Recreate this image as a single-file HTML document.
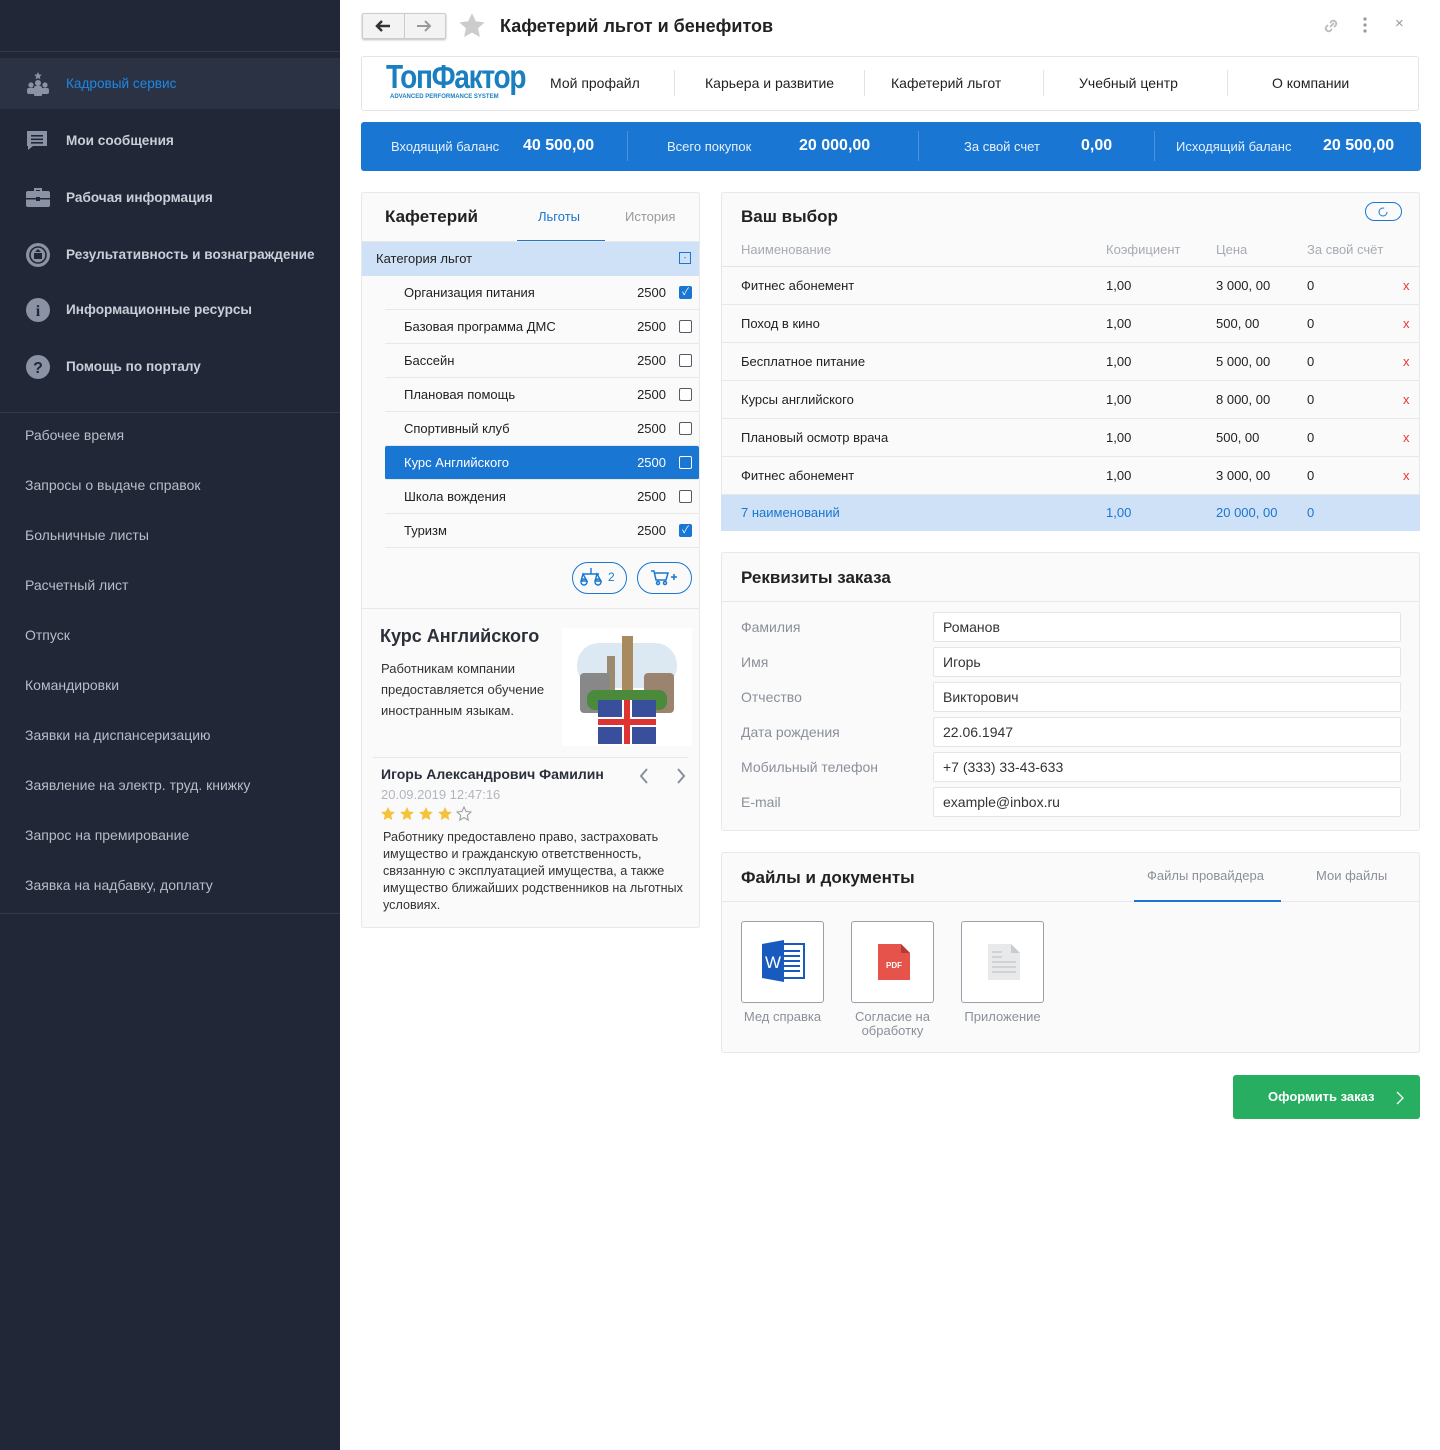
<!DOCTYPE html>
<html><head><meta charset="utf-8"><style>
*{box-sizing:border-box;margin:0;padding:0}
body{width:1440px;height:1450px;background:#fff;font-family:"Liberation Sans","Noto Sans CJK SC",sans-serif;color:#222;position:relative;overflow:hidden;font-size:13px}
.a{position:absolute}
#sb{left:0;top:0;width:340px;height:1450px;background:#212736}
.nav{left:0;width:340px;height:50px;color:#c9ced8;font-size:13.6px;font-weight:bold;display:flex;align-items:center;padding-left:66px}
.nav svg{position:absolute;left:25px;top:13px}
.sub{left:25px;color:#b8bdc8;font-size:14px}
.card{background:#fafafa;border:1px solid #e6e8eb;border-radius:3px}
.row{height:34px;border-bottom:1px solid #e8e8e8;display:flex;align-items:center;font-size:13px}
.cb{width:13px;height:13px;border:1.5px solid #555c66;border-radius:2px;background:#fff}
.cbx{width:13px;height:13px;background:#1976d2;border-radius:2px;color:#fff;font-size:10px;line-height:13px;text-align:center}
.tr{position:absolute;left:721px;width:699px;height:38px;border-bottom:1px solid #e8e8e8;font-size:13px}
.tr span{position:absolute;top:11px}
.x{color:#e53935;left:682px}
.fl{left:741px;color:#8a909a;font-size:14px}
.in{left:933px;width:468px;height:30px;background:#fff;border:1px solid #e3e5e8;border-radius:2px;font-size:14px;padding:6px 9px;color:#333}
.fb{width:83px;height:82px;border:1px solid #9aa0aa;border-radius:3px;background:#fff}
.fc{width:83px;text-align:center;color:#8a909a;font-size:13px;line-height:14px}
</style></head><body>
<div id="sb" class="a">
 <div class="a" style="left:0;top:51px;width:340px;height:1px;background:#323a4a"></div>
 <div class="a" style="left:0;top:58px;width:340px;height:51px;background:#2a3243"></div>
 <div class="a nav" style="top:58px;color:#1e88e5;font-weight:normal"><svg width="26" height="26" viewBox="0 0 26 26" fill="#8a92a3"><path d="M13 1l1.2 2.5 2.6.3-2 1.8.6 2.6L13 7l-2.4 1.2.6-2.6-2-1.8 2.6-.3z"/><circle cx="13" cy="12" r="3"/><circle cx="6" cy="14" r="2.6"/><circle cx="20" cy="14" r="2.6"/><rect x="9" y="15" width="8" height="6" rx="2"/><rect x="2" y="17" width="8" height="6" rx="2"/><rect x="16" y="17" width="8" height="6" rx="2"/><rect x="9" y="21" width="8" height="4" rx="1"/></svg>Кадровый сервис</div>
 <div class="a nav" style="top:115px"><svg width="24" height="24" viewBox="0 0 24 24" fill="#8a92a3"><path d="M2 3h20v15H8l-5 4v-4H2z"/><rect x="6" y="7" width="12" height="1.6" fill="#212736"/><rect x="6" y="10.5" width="12" height="1.6" fill="#212736"/><rect x="6" y="14" width="12" height="1.6" fill="#212736"/></svg>Мои сообщения</div>
 <div class="a nav" style="top:172px"><svg width="26" height="24" viewBox="0 0 26 24" fill="#8a92a3"><path d="M9 3h8v3h-2V5h-4v1H9z"/><rect x="1" y="6" width="24" height="16" rx="2"/><rect x="1" y="13" width="24" height="1.5" fill="#212736"/><rect x="11" y="12" width="4" height="4" fill="#212736"/></svg>Рабочая информация</div>
 <div class="a nav" style="top:229px"><svg width="26" height="26" viewBox="0 0 26 26"><circle cx="13" cy="13" r="12" fill="#8a92a3"/><circle cx="13" cy="13" r="8" fill="none" stroke="#212736" stroke-width="1.6"/><rect x="9" y="11" width="8" height="6" fill="#212736"/><path d="M10 10l3-3 3 3z" fill="#212736"/></svg>Результативность и вознаграждение</div>
 <div class="a nav" style="top:284px"><svg width="26" height="26" viewBox="0 0 26 26"><circle cx="13" cy="13" r="12" fill="#8a92a3"/><text x="13" y="19" font-size="16" font-weight="bold" text-anchor="middle" fill="#212736" font-family="Liberation Serif">i</text></svg>Информационные ресурсы</div>
 <div class="a nav" style="top:341px"><svg width="26" height="26" viewBox="0 0 26 26"><circle cx="13" cy="13" r="12" fill="#8a92a3"/><text x="13" y="19" font-size="16" font-weight="bold" text-anchor="middle" fill="#212736">?</text></svg>Помощь по порталу</div>
 <div class="a" style="left:0;top:412px;width:340px;height:1px;background:#323a4a"></div>
 <div class="a sub" style="top:427px">Рабочее время</div>
 <div class="a sub" style="top:477px">Запросы о выдаче справок</div>
 <div class="a sub" style="top:527px">Больничные листы</div>
 <div class="a sub" style="top:577px">Расчетный лист</div>
 <div class="a sub" style="top:627px">Отпуск</div>
 <div class="a sub" style="top:677px">Командировки</div>
 <div class="a sub" style="top:727px">Заявки на диспансеризацию</div>
 <div class="a sub" style="top:777px">Заявление на электр. труд. книжку</div>
 <div class="a sub" style="top:827px">Запрос на премирование</div>
 <div class="a sub" style="top:877px">Заявка на надбавку, доплату</div>
 <div class="a" style="left:0;top:913px;width:340px;height:1px;background:#323a4a"></div>
</div>

<div class="a" style="left:362px;top:13px;width:84px;height:26px;border:1px solid #ccc;border-radius:2px;background:#f3f3f3;box-shadow:0 1px 2px #bbb"></div>
<div class="a" style="left:404px;top:14px;width:1px;height:24px;background:#ccc"></div>
<svg class="a" style="left:374px;top:19px" width="18" height="14" viewBox="0 0 18 14"><path d="M16 7H4M8 2L3 7l5 5" stroke="#333" stroke-width="2.5" fill="none"/></svg>
<svg class="a" style="left:415px;top:19px" width="18" height="14" viewBox="0 0 18 14"><path d="M2 7h12M10 2l5 5-5 5" stroke="#999" stroke-width="2" fill="none"/></svg>
<svg class="a" style="left:458px;top:12px" width="28" height="27" viewBox="0 0 24 23"><path d="M12 1l3.3 7 7.5.8-5.6 5.1 1.6 7.5L12 17.6 5.2 21.4l1.6-7.5L1.2 8.8l7.5-.8z" fill="#ccc"/></svg>
<div class="a" style="left:500px;top:16px;font-size:18px;font-weight:bold;color:#222">Кафетерий льгот и бенефитов</div>
<svg class="a" style="left:1322px;top:17px" width="18" height="18" viewBox="0 0 18 18"><path d="M8 10l4-4M6 8l-2 2a3 3 0 004 4l2-2M12 10l2-2a3 3 0 00-4-4L8 6" stroke="#bbb" stroke-width="1.8" fill="none"/></svg>
<svg class="a" style="left:1362px;top:17px" width="6" height="16"><circle cx="3" cy="2" r="1.6" fill="#999"/><circle cx="3" cy="8" r="1.6" fill="#999"/><circle cx="3" cy="14" r="1.6" fill="#999"/></svg>
<div class="a" style="left:1395px;top:15px;color:#999;font-size:15px">×</div>

<div class="a" style="left:361px;top:56px;width:1058px;height:55px;border:1px solid #e2e4e8;border-radius:3px;background:#fff"></div>
<div class="a" style="left:386px;top:58px;font-size:33px;font-weight:bold;color:#1a7fc1;letter-spacing:-1.5px;transform:scaleX(.85);transform-origin:left">ТопФактор</div>
<div class="a" style="left:390px;top:94px;font-size:6px;font-weight:bold;color:#1a7fc1">ADVANCED PERFORMANCE SYSTEM</div>
<div class="a" style="left:550px;top:75px;font-size:14px">Мой профайл</div>
<div class="a" style="left:674px;top:70px;width:1px;height:26px;background:#e3e3e3"></div>
<div class="a" style="left:705px;top:75px;font-size:14px">Карьера и развитие</div>
<div class="a" style="left:864px;top:70px;width:1px;height:26px;background:#e3e3e3"></div>
<div class="a" style="left:891px;top:75px;font-size:14px">Кафетерий льгот</div>
<div class="a" style="left:1043px;top:70px;width:1px;height:26px;background:#e3e3e3"></div>
<div class="a" style="left:1079px;top:75px;font-size:14px">Учебный центр</div>
<div class="a" style="left:1227px;top:70px;width:1px;height:26px;background:#e3e3e3"></div>
<div class="a" style="left:1272px;top:75px;font-size:14px">О компании</div>

<div class="a" style="left:361px;top:122px;width:1060px;height:49px;background:#1976d2;border-radius:3px;color:#fff"></div>
<div class="a" style="left:391px;top:139px;color:#e8f0fb;font-size:13px">Входящий баланс</div>
<div class="a" style="left:523px;top:137px;color:#fff;font-size:16px;font-weight:bold">40 500,00</div>
<div class="a" style="left:627px;top:131px;width:1px;height:30px;background:#4b93e0"></div>
<div class="a" style="left:667px;top:139px;color:#e8f0fb;font-size:13px">Всего покупок</div>
<div class="a" style="left:799px;top:137px;color:#fff;font-size:16px;font-weight:bold">20 000,00</div>
<div class="a" style="left:918px;top:131px;width:1px;height:30px;background:#4b93e0"></div>
<div class="a" style="left:964px;top:139px;color:#e8f0fb;font-size:13px">За свой счет</div>
<div class="a" style="left:1081px;top:137px;color:#fff;font-size:16px;font-weight:bold">0,00</div>
<div class="a" style="left:1154px;top:131px;width:1px;height:30px;background:#4b93e0"></div>
<div class="a" style="left:1176px;top:139px;color:#e8f0fb;font-size:13px">Исходящий баланс</div>
<div class="a" style="left:1323px;top:137px;color:#fff;font-size:16px;font-weight:bold">20 500,00</div>

<!-- left card -->
<div class="a card" style="left:361px;top:192px;width:339px;height:736px"></div>
<div class="a" style="left:385px;top:207px;font-size:17px;font-weight:bold">Кафетерий</div>
<div class="a" style="left:538px;top:209px;color:#1976d2;font-size:13px">Льготы</div>
<div class="a" style="left:625px;top:209px;color:#999;font-size:13px">История</div>
<div class="a" style="left:517px;top:240px;width:88px;height:2px;background:#1976d2"></div>
<div class="a" style="left:361px;top:241px;width:338px;height:1px;background:#e6e8eb"></div>
<div class="a" style="left:362px;top:242px;width:337px;height:34px;background:#cfe1f6"></div>
<div class="a" style="left:376px;top:251px;font-size:13px">Категория льгот</div>
<div class="a" style="left:679px;top:252px;width:12px;height:12px;border:1px solid #1976d2;font-size:8px;color:#1976d2;text-align:center;line-height:9px">-</div>
<div class="a" style="left:385px;top:276px;width:314px">
 <div class="row"><span style="margin-left:19px;flex:1">Организация питания</span><span style="margin-right:13px">2500</span><div class="cbx" style="margin-right:7px">✓</div></div>
 <div class="row"><span style="margin-left:19px;flex:1">Базовая программа ДМС</span><span style="margin-right:13px">2500</span><div class="cb" style="margin-right:7px"></div></div>
 <div class="row"><span style="margin-left:19px;flex:1">Бассейн</span><span style="margin-right:13px">2500</span><div class="cb" style="margin-right:7px"></div></div>
 <div class="row"><span style="margin-left:19px;flex:1">Плановая помощь</span><span style="margin-right:13px">2500</span><div class="cb" style="margin-right:7px"></div></div>
 <div class="row"><span style="margin-left:19px;flex:1">Спортивный клуб</span><span style="margin-right:13px">2500</span><div class="cb" style="margin-right:7px"></div></div>
 <div class="row" style="background:#1976d2;color:#fff;border-radius:2px"><span style="margin-left:19px;flex:1">Курс Английского</span><span style="margin-right:13px">2500</span><div class="cb" style="margin-right:7px;border-color:#fff;background:#1976d2"></div></div>
 <div class="row"><span style="margin-left:19px;flex:1">Школа вождения</span><span style="margin-right:13px">2500</span><div class="cb" style="margin-right:7px"></div></div>
 <div class="row"><span style="margin-left:19px;flex:1">Туризм</span><span style="margin-right:13px">2500</span><div class="cbx" style="margin-right:7px">✓</div></div>
</div>
<div class="a" style="left:572px;top:562px;width:55px;height:32px;border:1.5px solid #1976d2;border-radius:16px;color:#1976d2;font-size:12px;padding:7px 0 0 35px">2</div>
<svg class="a" style="left:580px;top:567px" width="22" height="20" viewBox="0 0 22 20" fill="none" stroke="#1976d2" stroke-width="1.4"><path d="M11 1v6M3 7h16M3 7l-2 7h6zM17 7l-2 7h6z"/><circle cx="4" cy="15" r="3"/><circle cx="18" cy="15" r="3"/></svg>
<div class="a" style="left:637px;top:562px;width:55px;height:32px;border:1.5px solid #1976d2;border-radius:16px"></div>
<svg class="a" style="left:650px;top:569px" width="30" height="18" viewBox="0 0 30 18" fill="none" stroke="#1976d2" stroke-width="1.5"><path d="M1 2h3l2 9h10l2-7H5"/><circle cx="8" cy="14" r="1.5"/><circle cx="15" cy="14" r="1.5"/><path d="M21 8h6M24 5v6"/></svg>
<div class="a" style="left:361px;top:608px;width:338px;height:1px;background:#e6e8eb"></div>
<div class="a" style="left:380px;top:626px;font-size:18px;font-weight:bold;color:#2a2f3a">Курс Английского</div>
<div class="a" style="left:381px;top:658px;width:180px;font-size:13px;line-height:21px;color:#333">Работникам компании предоставляется обучение иностранным языкам.</div>
<div class="a" style="left:562px;top:628px;width:130px;height:118px;background:#fff;overflow:hidden">
 <div class="a" style="left:15px;top:15px;width:100px;height:45px;background:#dde9f2;border-radius:22px"></div>
 <div class="a" style="left:60px;top:8px;width:11px;height:65px;background:#a98a5e"></div>
 <div class="a" style="left:45px;top:28px;width:8px;height:40px;background:#9a8a70"></div>
 <div class="a" style="left:18px;top:45px;width:30px;height:40px;background:#888;border-radius:4px"></div>
 <div class="a" style="left:82px;top:45px;width:30px;height:40px;background:#9a8470;border-radius:4px"></div>
 <div class="a" style="left:25px;top:62px;width:80px;height:20px;background:#4a8a3a;border-radius:8px"></div>
 <div class="a" style="left:36px;top:72px;width:58px;height:44px;background:#3a4f9c"></div>
 <div class="a" style="left:36px;top:89px;width:58px;height:10px;background:#fff"></div>
 <div class="a" style="left:60px;top:72px;width:10px;height:44px;background:#fff"></div>
 <div class="a" style="left:36px;top:91px;width:58px;height:6px;background:#d33"></div>
 <div class="a" style="left:62px;top:72px;width:6px;height:44px;background:#d33"></div>
</div>
<div class="a" style="left:373px;top:757px;width:315px;height:1px;background:#e6e8eb"></div>
<div class="a" style="left:381px;top:766px;font-size:14px;font-weight:bold;color:#2a2f3a">Игорь Александрович Фамилин</div>
<svg class="a" style="left:638px;top:767px" width="12" height="18"><path d="M9 2L3 9l6 7" stroke="#8a909a" stroke-width="2" fill="none"/></svg>
<svg class="a" style="left:675px;top:767px" width="12" height="18"><path d="M3 2l6 7-6 7" stroke="#8a909a" stroke-width="2" fill="none"/></svg>
<div class="a" style="left:381px;top:787px;color:#b0b5be;font-size:13px">20.09.2019 12:47:16</div>
<svg class="a" style="left:380px;top:806px" width="95" height="16" viewBox="0 0 95 16"><g id="s"><path d="M8 1l2.1 4.5 4.9.5-3.7 3.3 1 4.8L8 11.6 3.7 14.1l1-4.8L1 6l4.9-.5z" fill="#f5c33b"/></g><use href="#s" x="19"/><use href="#s" x="38"/><use href="#s" x="57"/><path transform="translate(76 0)" d="M8 1l2.1 4.5 4.9.5-3.7 3.3 1 4.8L8 11.6 3.7 14.1l1-4.8L1 6l4.9-.5z" fill="none" stroke="#999"/></svg>
<div class="a" style="left:383px;top:829px;width:305px;font-size:12.6px;line-height:17px;color:#333">Работнику предоставлено право, застраховать имущество и гражданскую ответственность, связанную с эксплуатацией имущества, а также имущество ближайших родственников на льготных условиях.</div>

<!-- right: choice -->
<div class="a card" style="left:721px;top:192px;width:699px;height:339px"></div>
<div class="a" style="left:741px;top:207px;font-size:17px;font-weight:bold">Ваш выбор</div>
<div class="a" style="left:1365px;top:202px;width:37px;height:19px;border:1.5px solid #1976d2;border-radius:10px"></div>
<svg class="a" style="left:1377px;top:206px" width="12" height="12"><circle cx="6" cy="6" r="4" stroke="#1976d2" stroke-width="1" fill="none" stroke-dasharray="20 5"/></svg>
<div class="tr" style="top:229px;border-color:#e3e5e8;color:#a6abb4"><span style="left:20px;top:13px">Наименование</span><span style="left:385px;top:13px">Коэфициент</span><span style="left:495px;top:13px">Цена</span><span style="left:586px;top:13px">За свой счёт</span></div>
<div class="tr" style="top:267px"><span style="left:20px">Фитнес абонемент</span><span style="left:385px">1,00</span><span style="left:495px">3 000, 00</span><span style="left:586px">0</span><span class="x">x</span></div>
<div class="tr" style="top:305px"><span style="left:20px">Поход в кино</span><span style="left:385px">1,00</span><span style="left:495px">500, 00</span><span style="left:586px">0</span><span class="x">x</span></div>
<div class="tr" style="top:343px"><span style="left:20px">Бесплатное питание</span><span style="left:385px">1,00</span><span style="left:495px">5 000, 00</span><span style="left:586px">0</span><span class="x">x</span></div>
<div class="tr" style="top:381px"><span style="left:20px">Курсы английского</span><span style="left:385px">1,00</span><span style="left:495px">8 000, 00</span><span style="left:586px">0</span><span class="x">x</span></div>
<div class="tr" style="top:419px"><span style="left:20px">Плановый осмотр врача</span><span style="left:385px">1,00</span><span style="left:495px">500, 00</span><span style="left:586px">0</span><span class="x">x</span></div>
<div class="tr" style="top:457px"><span style="left:20px">Фитнес абонемент</span><span style="left:385px">1,00</span><span style="left:495px">3 000, 00</span><span style="left:586px">0</span><span class="x">x</span></div>
<div class="tr" style="top:495px;height:36px;background:#cfe1f6;color:#1976d2;border:none"><span style="left:20px;top:10px">7 наименований</span><span style="left:385px;top:10px">1,00</span><span style="left:495px;top:10px">20 000, 00</span><span style="left:586px;top:10px">0</span></div>

<!-- requisites -->
<div class="a card" style="left:721px;top:552px;width:699px;height:279px"></div>
<div class="a" style="left:741px;top:568px;font-size:17px;font-weight:bold">Реквизиты заказа</div>
<div class="a" style="left:721px;top:601px;width:699px;height:1px;background:#e6e8eb"></div>
<div class="a fl" style="top:619px">Фамилия</div><div class="a in" style="top:612px">Романов</div>
<div class="a fl" style="top:654px">Имя</div><div class="a in" style="top:647px">Игорь</div>
<div class="a fl" style="top:689px">Отчество</div><div class="a in" style="top:682px">Викторович</div>
<div class="a fl" style="top:724px">Дата рождения</div><div class="a in" style="top:717px">22.06.1947</div>
<div class="a fl" style="top:759px">Мобильный телефон</div><div class="a in" style="top:752px">+7 (333) 33-43-633</div>
<div class="a fl" style="top:794px">E-mail</div><div class="a in" style="top:787px">example@inbox.ru</div>

<!-- files -->
<div class="a card" style="left:721px;top:852px;width:699px;height:201px"></div>
<div class="a" style="left:741px;top:868px;font-size:17px;font-weight:bold">Файлы и документы</div>
<div class="a" style="left:1147px;top:868px;color:#8a909a;font-size:13px">Файлы провайдера</div>
<div class="a" style="left:1316px;top:868px;color:#8a909a;font-size:13px">Мои файлы</div>
<div class="a" style="left:721px;top:901px;width:699px;height:1px;background:#e6e8eb"></div>
<div class="a" style="left:1134px;top:900px;width:147px;height:2px;background:#1976d2"></div>
<div class="a fb" style="left:741px;top:921px"><svg class="a" style="left:20px;top:18px" width="44" height="42" viewBox="0 0 44 42"><rect x="12" y="4" width="30" height="34" fill="#fff" stroke="#185abd" stroke-width="2"/><path d="M16 11h22M16 16h22M16 21h22M16 26h22M16 31h22" stroke="#185abd" stroke-width="2"/><path d="M0 4l22-4v42L0 38z" fill="#185abd"/><text x="3" y="28" font-size="17" fill="#fff" font-family="Liberation Sans">W</text></svg></div>
<div class="a fb" style="left:851px;top:921px"><svg class="a" style="left:26px;top:22px" width="32" height="36" viewBox="0 0 32 36"><path d="M0 0h23l9 9v27H0z" fill="#e5534b"/><path d="M23 0v9h9z" fill="#b53a33"/><text x="16" y="24" font-size="8" font-weight="bold" fill="#fff" text-anchor="middle">PDF</text></svg></div>
<div class="a fb" style="left:961px;top:921px"><svg class="a" style="left:26px;top:22px" width="32" height="36" viewBox="0 0 32 36"><path d="M0 0h23l9 9v27H0z" fill="#e8e9eb"/><path d="M23 0v9h9z" fill="#c9cbce"/><path d="M4 8h10M4 13h10M4 18h24M4 23h24M4 28h24" stroke="#d0d2d5" stroke-width="2"/></svg></div>
<div class="a fc" style="left:741px;top:1010px">Мед справка</div>
<div class="a fc" style="left:851px;top:1010px">Согласие на обработку</div>
<div class="a fc" style="left:961px;top:1010px">Приложение</div>

<div class="a" style="left:1233px;top:1075px;width:187px;height:44px;background:#27ae60;border-radius:3px;color:#fff;font-weight:bold;font-size:13px;padding:14px 0 0 35px">Оформить заказ</div>
<svg class="a" style="left:1396px;top:1091px" width="8" height="14"><path d="M1 1l6 6-6 6" stroke="#fff" stroke-width="1.3" fill="none"/></svg>
</body></html>
